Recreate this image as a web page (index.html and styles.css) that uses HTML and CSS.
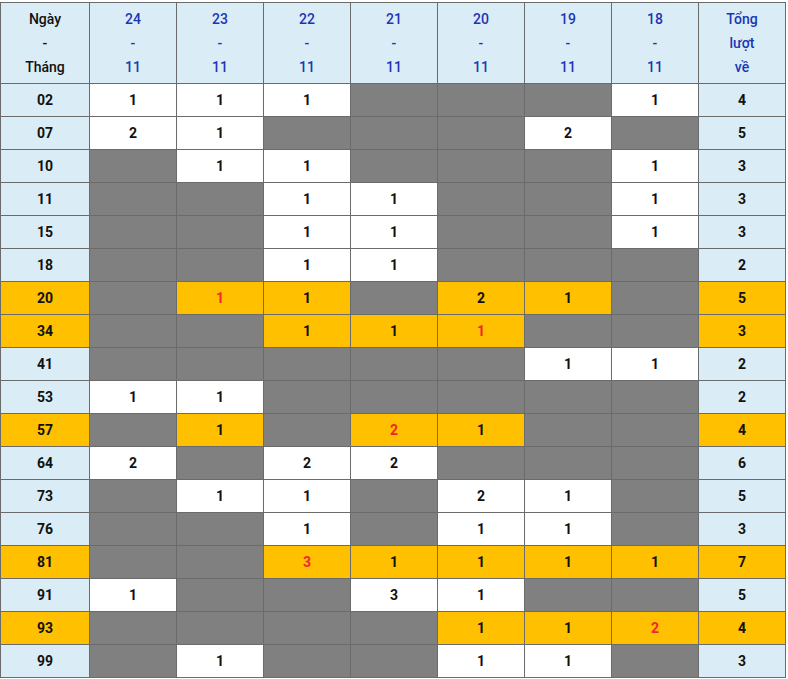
FILE: index.html
```html
<!DOCTYPE html>
<html>
<head>
<meta charset="utf-8">
<link rel="stylesheet" href="styles.css">
</head>
<body>
<table class="stat">
<thead>
<tr>
<th class="lbl">Ngày<br>-<br>Tháng</th>
<th>24<br>-<br>11</th>
<th>23<br>-<br>11</th>
<th>22<br>-<br>11</th>
<th>21<br>-<br>11</th>
<th>20<br>-<br>11</th>
<th>19<br>-<br>11</th>
<th>18<br>-<br>11</th>
<th>Tổng<br>lượt<br>về</th>
</tr>
</thead>
<tbody>
<tr><td class="k">02</td><td class="w">1</td><td class="w">1</td><td class="w">1</td><td class="g"></td><td class="g"></td><td class="g"></td><td class="w">1</td><td class="k">4</td></tr>
<tr><td class="k">07</td><td class="w">2</td><td class="w">1</td><td class="g"></td><td class="g"></td><td class="g"></td><td class="w">2</td><td class="g"></td><td class="k">5</td></tr>
<tr><td class="k">10</td><td class="g"></td><td class="w">1</td><td class="w">1</td><td class="g"></td><td class="g"></td><td class="g"></td><td class="w">1</td><td class="k">3</td></tr>
<tr><td class="k">11</td><td class="g"></td><td class="g"></td><td class="w">1</td><td class="w">1</td><td class="g"></td><td class="g"></td><td class="w">1</td><td class="k">3</td></tr>
<tr><td class="k">15</td><td class="g"></td><td class="g"></td><td class="w">1</td><td class="w">1</td><td class="g"></td><td class="g"></td><td class="w">1</td><td class="k">3</td></tr>
<tr><td class="k">18</td><td class="g"></td><td class="g"></td><td class="w">1</td><td class="w">1</td><td class="g"></td><td class="g"></td><td class="g"></td><td class="k">2</td></tr>
<tr><td class="y">20</td><td class="g"></td><td class="y r">1</td><td class="y">1</td><td class="g"></td><td class="y">2</td><td class="y">1</td><td class="g"></td><td class="y">5</td></tr>
<tr><td class="y">34</td><td class="g"></td><td class="g"></td><td class="y">1</td><td class="y">1</td><td class="y r">1</td><td class="g"></td><td class="g"></td><td class="y">3</td></tr>
<tr><td class="k">41</td><td class="g"></td><td class="g"></td><td class="g"></td><td class="g"></td><td class="g"></td><td class="w">1</td><td class="w">1</td><td class="k">2</td></tr>
<tr><td class="k">53</td><td class="w">1</td><td class="w">1</td><td class="g"></td><td class="g"></td><td class="g"></td><td class="g"></td><td class="g"></td><td class="k">2</td></tr>
<tr><td class="y">57</td><td class="g"></td><td class="y">1</td><td class="g"></td><td class="y r">2</td><td class="y">1</td><td class="g"></td><td class="g"></td><td class="y">4</td></tr>
<tr><td class="k">64</td><td class="w">2</td><td class="g"></td><td class="w">2</td><td class="w">2</td><td class="g"></td><td class="g"></td><td class="g"></td><td class="k">6</td></tr>
<tr><td class="k">73</td><td class="g"></td><td class="w">1</td><td class="w">1</td><td class="g"></td><td class="w">2</td><td class="w">1</td><td class="g"></td><td class="k">5</td></tr>
<tr><td class="k">76</td><td class="g"></td><td class="g"></td><td class="w">1</td><td class="g"></td><td class="w">1</td><td class="w">1</td><td class="g"></td><td class="k">3</td></tr>
<tr><td class="y">81</td><td class="g"></td><td class="g"></td><td class="y r">3</td><td class="y">1</td><td class="y">1</td><td class="y">1</td><td class="y">1</td><td class="y">7</td></tr>
<tr><td class="k">91</td><td class="w">1</td><td class="g"></td><td class="g"></td><td class="w">3</td><td class="w">1</td><td class="g"></td><td class="g"></td><td class="k">5</td></tr>
<tr><td class="y">93</td><td class="g"></td><td class="g"></td><td class="g"></td><td class="g"></td><td class="y">1</td><td class="y">1</td><td class="y r">2</td><td class="y">4</td></tr>
<tr><td class="k">99</td><td class="g"></td><td class="w">1</td><td class="g"></td><td class="g"></td><td class="w">1</td><td class="w">1</td><td class="g"></td><td class="k">3</td></tr>
</tbody>
</table>
</body>
</html>
```
FILE: styles.css
```css
html, body {
  margin: 0;
  padding: 0;
  background: #ffffff;
}
body {
  padding-top: 2px;
  font-family: Roboto, "Liberation Sans", Arial, sans-serif;
}
.stat {
  border-collapse: collapse;
  width: 786px;
  table-layout: fixed;
  font-size: 14px;
}
.stat th,
.stat td {
  border: 1px solid #6b6b6b;
  text-align: center;
  padding: 0;
}
.stat th {
  background: #daedf6;
  color: #1b35b5;
  font-weight: 500;
  line-height: 24px;
  height: 80px;
  width: 86px;
}
.stat th.lbl {
  color: #111111;
  width: 88px;
}
.stat td {
  height: 32px;
  font-weight: 700;
  color: #111111;
}
.stat td.k {
  background: #daedf6;
}
.stat td.w {
  background: #ffffff;
}
.stat td.g {
  background: #808080;
}
.stat td.y {
  background: #ffc000;
}
.stat td.r {
  color: #f3262b;
}
```
